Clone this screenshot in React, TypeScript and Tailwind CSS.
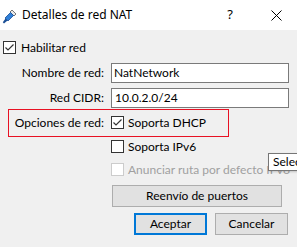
import React from 'react';

const Check = ({ checked = false, disabled = false }: { checked?: boolean; disabled?: boolean }) => (
  <div
    className={`w-[13px] h-[13px] border bg-white flex items-center justify-center shrink-0 ${
      disabled ? 'border-[#cccccc]' : 'border-[#333333]'
    }`}
  >
    {checked && (
      <svg width="11" height="11" viewBox="0 0 11 11">
        <polyline points="1.5,5.5 4,8 9.5,2.5" fill="none" stroke="#333333" strokeWidth="1.2" />
      </svg>
    )}
  </div>
);

const PlugIcon = () => (
  <svg width="16" height="16" viewBox="0 0 16 16">
    <path d="M10 2 L14 6 L12 8 L8 4 Z" fill="#e8e8e8" stroke="#555" strokeWidth="0.8" />
    <path d="M8.5 4.5 L11.5 7.5 L6 13 L3 10 Z" fill="#2f7fd8" stroke="#1b4f96" strokeWidth="0.8" />
    <path d="M3.5 10.5 L5.5 12.5 L2 15.5 L0.8 14.2 Z" fill="#1b4f96" />
  </svg>
);

export default function App() {
  return (
    <div
      className="w-[297px] h-[247px] overflow-hidden bg-[#f0f0f0] text-[12px] text-black relative"
      style={{ fontFamily: 'Lato, "Noto Sans", sans-serif' }}
    >
      <div className="h-[30px] bg-white flex items-center" style={{ fontFamily: '"Noto Sans", sans-serif' }}>
        <div className="ml-[2px] mt-[1px]">
          <PlugIcon />
        </div>
        <span className="ml-[4px] text-[12px]">Detalles de red NAT</span>
        <span className="ml-auto mr-[38px] text-[13px]">?</span>
        <svg className="mr-[15px]" width="11" height="11" viewBox="0 0 11 11">
          <path d="M0.5 0.5 L10.5 10.5 M10.5 0.5 L0.5 10.5" stroke="#000" strokeWidth="1" />
        </svg>
      </div>

      <div className="flex flex-col">
        <div className="mt-[11px] ml-[3px] flex items-center gap-[5px] h-[13px]">
          <Check checked />
          <span>Habilitar red</span>
        </div>

        <div className="mt-[9px] flex items-center">
          <span className="w-[104px] text-right">Nombre de red:</span>
          <div className="ml-[7px] w-[178px] h-[20px] bg-white border border-[#7a7a7a] flex items-center pl-[2px]">
            NatNetwork
          </div>
        </div>

        <div className="mt-[5px] flex items-center">
          <span className="w-[104px] text-right">Red CIDR:</span>
          <div className="ml-[7px] w-[178px] h-[20px] bg-white border border-[#7a7a7a] flex items-center pl-[3px]">
            10.0.2.0/24
          </div>
        </div>

        <div className="mt-[8px] flex items-center h-[13px]">
          <span className="w-[104px] text-right">Opciones de red:</span>
          <div className="ml-[7px] flex items-center gap-[4px]">
            <Check checked />
            <span>Soporta DHCP</span>
          </div>
        </div>

        <div className="mt-[11px] ml-[111px] flex items-center gap-[4px] h-[13px]">
          <Check />
          <span>Soporta IPv6</span>
        </div>

        <div className="mt-[10px] ml-[111px] flex items-center gap-[4px] h-[13px] whitespace-nowrap">
          <Check disabled />
          <span className="text-[#a0a0a0]">Anunciar ruta por defecto IPv6</span>
        </div>

        <button className="mt-[9px] ml-[112px] w-[170px] h-[22px] bg-[#e1e1e1] border border-[#adadad] flex items-center justify-center">
          Reenvío de puertos
        </button>

        <div className="mt-[6px] ml-[134px] flex gap-[8px]">
          <button className="w-[73px] h-[22px] bg-[#e1e1e1] border-2 border-[#0078d7] flex items-center justify-center">
            Aceptar
          </button>
          <button className="w-[73px] h-[22px] bg-[#e1e1e1] border border-[#adadad] flex items-center justify-center">
            Cancelar
          </button>
        </div>
      </div>

      <div className="absolute left-[8px] top-[109px] w-[221px] h-[28px] border border-[#e81123] pointer-events-none" />

      <div className="absolute left-[268px] top-[153px] h-[18px] pl-[4px] pr-[6px] bg-white border border-[#767676] flex items-center whitespace-nowrap shadow-[1px_1px_2px_rgba(0,0,0,0.2)]">
        Seleccione
      </div>
    </div>
  );
}
